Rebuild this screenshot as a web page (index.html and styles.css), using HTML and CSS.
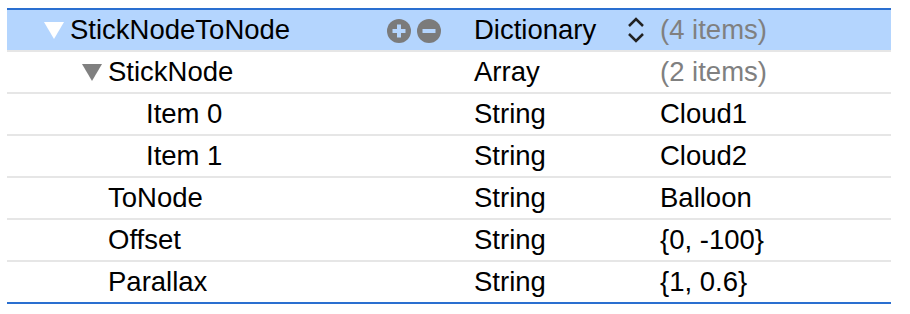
FILE: index.html
```html
<!DOCTYPE html>
<html lang="en">
<head>
  <meta charset="UTF-8">
  <title>Property List</title>
  <link rel="stylesheet" href="styles.css">
</head>
<body>
  <div class="plist">
    <div class="row selected">
      <div class="key level-0">
        <svg class="disclosure" width="20" height="17" viewBox="0 0 20 17"><polygon points="0,0 20,0 10,17" fill="#fff"/></svg>
        <span class="name">StickNodeToNode</span>
        <span class="buttons">
          <svg width="24" height="24" viewBox="0 0 24 24"><circle cx="12" cy="12" r="12" fill="#7b7b7b"/><rect x="5.5" y="10" width="13" height="4" fill="#b4d5fe"/><rect x="10" y="5.5" width="4" height="13" fill="#b4d5fe"/></svg>
          <svg width="24" height="24" viewBox="0 0 24 24"><circle cx="12" cy="12" r="12" fill="#7b7b7b"/><rect x="5.5" y="10" width="13" height="4" fill="#b4d5fe"/></svg>
        </span>
      </div>
      <div class="type">
        <span>Dictionary</span>
        <svg class="stepper" width="18" height="26" viewBox="0 0 18 26"><polyline points="2,9 9,2 16,9" fill="none" stroke="#222" stroke-width="2.5"/><polyline points="2,17 9,24 16,17" fill="none" stroke="#222" stroke-width="2.5"/></svg>
      </div>
      <div class="value muted">(4 items)</div>
    </div>
    <div class="row">
      <div class="key level-1">
        <svg class="disclosure" width="20" height="17" viewBox="0 0 20 17"><polygon points="0,0 20,0 10,17" fill="#808080"/></svg>
        <span class="name">StickNode</span>
      </div>
      <div class="type">Array</div>
      <div class="value muted">(2 items)</div>
    </div>
    <div class="row">
      <div class="key level-2"><span class="spacer"></span><span class="name">Item 0</span></div>
      <div class="type">String</div>
      <div class="value">Cloud1</div>
    </div>
    <div class="row">
      <div class="key level-2"><span class="spacer"></span><span class="name">Item 1</span></div>
      <div class="type">String</div>
      <div class="value">Cloud2</div>
    </div>
    <div class="row">
      <div class="key level-1"><span class="spacer"></span><span class="name">ToNode</span></div>
      <div class="type">String</div>
      <div class="value">Balloon</div>
    </div>
    <div class="row">
      <div class="key level-1"><span class="spacer"></span><span class="name">Offset</span></div>
      <div class="type">String</div>
      <div class="value">{0, -100}</div>
    </div>
    <div class="row">
      <div class="key level-1"><span class="spacer"></span><span class="name">Parallax</span></div>
      <div class="type">String</div>
      <div class="value">{1, 0.6}</div>
    </div>
  </div>
</body>
</html>
```

FILE: styles.css
```css
body {
  margin: 0;
  padding: 8px 19px 0 7px;
  background: #fff;
  font-family: "Liberation Sans", Arial, sans-serif;
  font-size: 27.5px;
  color: #000;
}
.plist {
  border-top: 2px solid #2a6fd0;
  border-bottom: 2px solid #2a6fd0;
}
.row {
  display: flex;
  align-items: center;
  height: 40px;
  border-bottom: 2px solid #e6e6e6;
}
.row:last-child {
  border-bottom: none;
}
.row.selected {
  background: #b4d5fe;
}
.key {
  display: flex;
  align-items: center;
  width: 467px;
  box-sizing: border-box;
}
.level-0 { padding-left: 37px; }
.level-1 { padding-left: 75px; }
.level-2 { padding-left: 113px; }
.disclosure,
.spacer {
  width: 20px;
  flex-shrink: 0;
  margin-right: 6px;
}
.buttons {
  display: flex;
  gap: 6px;
  margin-left: auto;
  margin-right: 33px;
  padding-top: 2px;
}
.type {
  display: flex;
  align-items: center;
  width: 186px;
}
.stepper {
  margin-left: auto;
  margin-right: 15px;
}
.muted {
  color: #808080;
}
```
